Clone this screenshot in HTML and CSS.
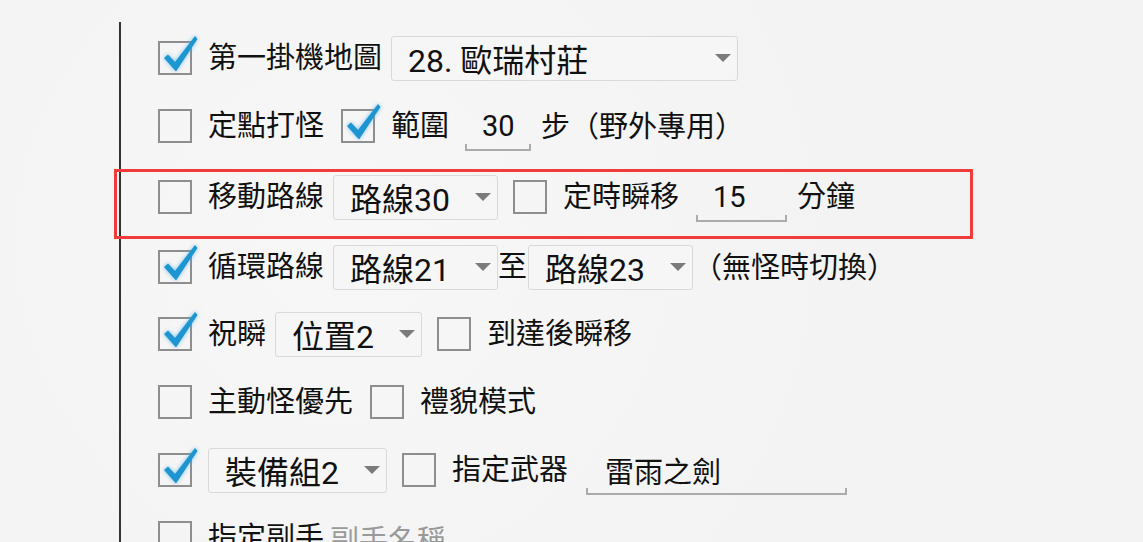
FILE: index.html
```html
<!DOCTYPE html>
<html lang="zh-Hant">
<head>
    <meta charset="UTF-8">
    <meta name="viewport" content="width=device-width, initial-scale=1.0">
    <title>掛機設定</title>
    <link rel="stylesheet" href="styles.css">
</head>
<body>

<div class="panel">
    <div class="row">
        <span class="cb on"><svg viewBox="0 -8 44 44"><path d="M6 17 L10 13.5 L17 21 L37 -5 L39.5 -2 L18 30.5 Z"/></svg></span>
        <span class="lbl">第一掛機地圖</span>
        <span class="sel wide"><span>28. 歐瑞村莊</span><i class="arrow"></i></span>
    </div>

    <div class="row">
        <span class="cb"></span>
        <span class="lbl">定點打怪</span>
        <span class="cb on"><svg viewBox="0 -8 44 44"><path d="M6 17 L10 13.5 L17 21 L37 -5 L39.5 -2 L18 30.5 Z"/></svg></span>
        <span class="lbl">範圍</span>
        <span class="field short">30</span>
        <span class="lbl unit">步<span class="p">（</span>野外專用<span class="p">）</span></span>
    </div>

    <div class="row marked">
        <span class="cb"></span>
        <span class="lbl">移動路線</span>
        <span class="sel"><span>路線30</span><i class="arrow"></i></span>
        <span class="cb"></span>
        <span class="lbl">定時瞬移</span>
        <span class="field mid">15</span>
        <span class="lbl unit">分鐘</span>
    </div>

    <div class="row tight">
        <span class="cb on"><svg viewBox="0 -8 44 44"><path d="M6 17 L10 13.5 L17 21 L37 -5 L39.5 -2 L18 30.5 Z"/></svg></span>
        <span class="lbl">循環路線</span>
        <span class="sel"><span>路線21</span><i class="arrow"></i></span>
        <span class="lbl join">至</span>
        <span class="sel flush"><span>路線23</span><i class="arrow"></i></span>
        <span class="lbl note"><span class="p">（</span>無怪時切換<span class="p">）</span></span>
    </div>

    <div class="row">
        <span class="cb on"><svg viewBox="0 -8 44 44"><path d="M6 17 L10 13.5 L17 21 L37 -5 L39.5 -2 L18 30.5 Z"/></svg></span>
        <span class="lbl">祝瞬</span>
        <span class="sel"><span>位置2</span><i class="arrow"></i></span>
        <span class="cb"></span>
        <span class="lbl">到達後瞬移</span>
    </div>

    <div class="row">
        <span class="cb"></span>
        <span class="lbl">主動怪優先</span>
        <span class="cb"></span>
        <span class="lbl">禮貌模式</span>
    </div>

    <div class="row">
        <span class="cb on"><svg viewBox="0 -8 44 44"><path d="M6 17 L10 13.5 L17 21 L37 -5 L39.5 -2 L18 30.5 Z"/></svg></span>
        <span class="sel flush"><span>裝備組2</span><i class="arrow"></i></span>
        <span class="cb"></span>
        <span class="lbl">指定武器</span>
        <span class="field long">雷雨之劍</span>
    </div>

    <div class="row">
        <span class="cb"></span>
        <span class="lbl">指定副手</span>
        <span class="field blank"><span class="muted">副手名稱</span></span>
    </div>
</div>

</body>
</html>
```

FILE: styles.css
```css
html, body {
    margin: 0;
    height: 542px;
    overflow: hidden;
}
body {
    background-color: #f4f4f4;
    background-image: radial-gradient(circle at 30% 45%, #f7f7f7 0, #f3f3f3 60%);
    font-family: "Roboto", "Noto Sans CJK TC", sans-serif;
    color: #111;
}
.panel {
    margin: 22px 0 0 119px;
    padding: 2px 0 0 37px;
    border-left: 2px solid #333;
    height: 520px;
}
.row {
    display: flex;
    align-items: center;
    height: 68px;
    white-space: nowrap;
}
.row.marked {
    height: 74px;
    position: relative;
}
.row.tight {
    height: 66px;
}
.row.marked::after {
    content: "";
    position: absolute;
    left: -44px;
    right: 170px;
    top: 9px;
    bottom: -5px;
    border: 3px solid #f23b3b;
}
.lbl {
    font-size: 29px;
    line-height: 1;
}
.p {
    font-family: "Noto Sans CJK JP", sans-serif;
}
.cb {
    flex: none;
    position: relative;
    width: 30px;
    height: 30px;
    border: 2px solid #8e8e8e;
    margin-right: 16px;
}
.lbl + .cb,
.field + .cb {
    margin-left: 17px;
}
.sel + .cb {
    margin-left: 15px;
}
.cb svg {
    position: absolute;
    left: -2px;
    top: -10px;
    width: 44px;
    height: 44px;
    fill: #1d95d0;
    filter: drop-shadow(0 0 2px rgba(70, 170, 230, 0.7));
}
.sel {
    display: inline-flex;
    align-items: center;
    justify-content: space-between;
    gap: 25px;
    height: 43px;
    padding: 0 6px 0 16px;
    margin-left: 9px;
    border: 1px solid #d9d9d9;
    border-radius: 3px;
    background-color: #f6f6f6;
    font-size: 32px;
    color: #111;
}
.sel.wide {
    width: 323px;
}
.sel.flush {
    margin-left: 0;
}
.cb + .sel {
    margin-left: 0;
}
.arrow {
    width: 0;
    height: 0;
    border-left: 8px solid transparent;
    border-right: 8px solid transparent;
    border-top: 8px solid #7b7b7b;
}
.join {
    margin: 0 1px 0 0;
}
.note {
    margin-left: 0;
}
.field {
    display: flex;
    align-items: center;
    height: 50px;
    margin: 0 10px 0 16px;
    padding: 0 0 0 17px;
    font-size: 29px;
    box-sizing: border-box;
    background:
        linear-gradient(#ababab, #ababab) left bottom / 2px 7px no-repeat,
        linear-gradient(#ababab, #ababab) right bottom / 2px 7px no-repeat,
        linear-gradient(#ababab, #ababab) left bottom / 100% 2px no-repeat;
}
.field.short {
    width: 66px;
}
.field.mid {
    width: 91px;
    margin-left: 17px;
}
.field.long {
    width: 261px;
    margin-left: 18px;
    padding-left: 19px;
}
.field.blank {
    background: none;
    margin-left: 6px;
    padding-left: 0;
}
.muted {
    color: #9a9a9a;
}
```
